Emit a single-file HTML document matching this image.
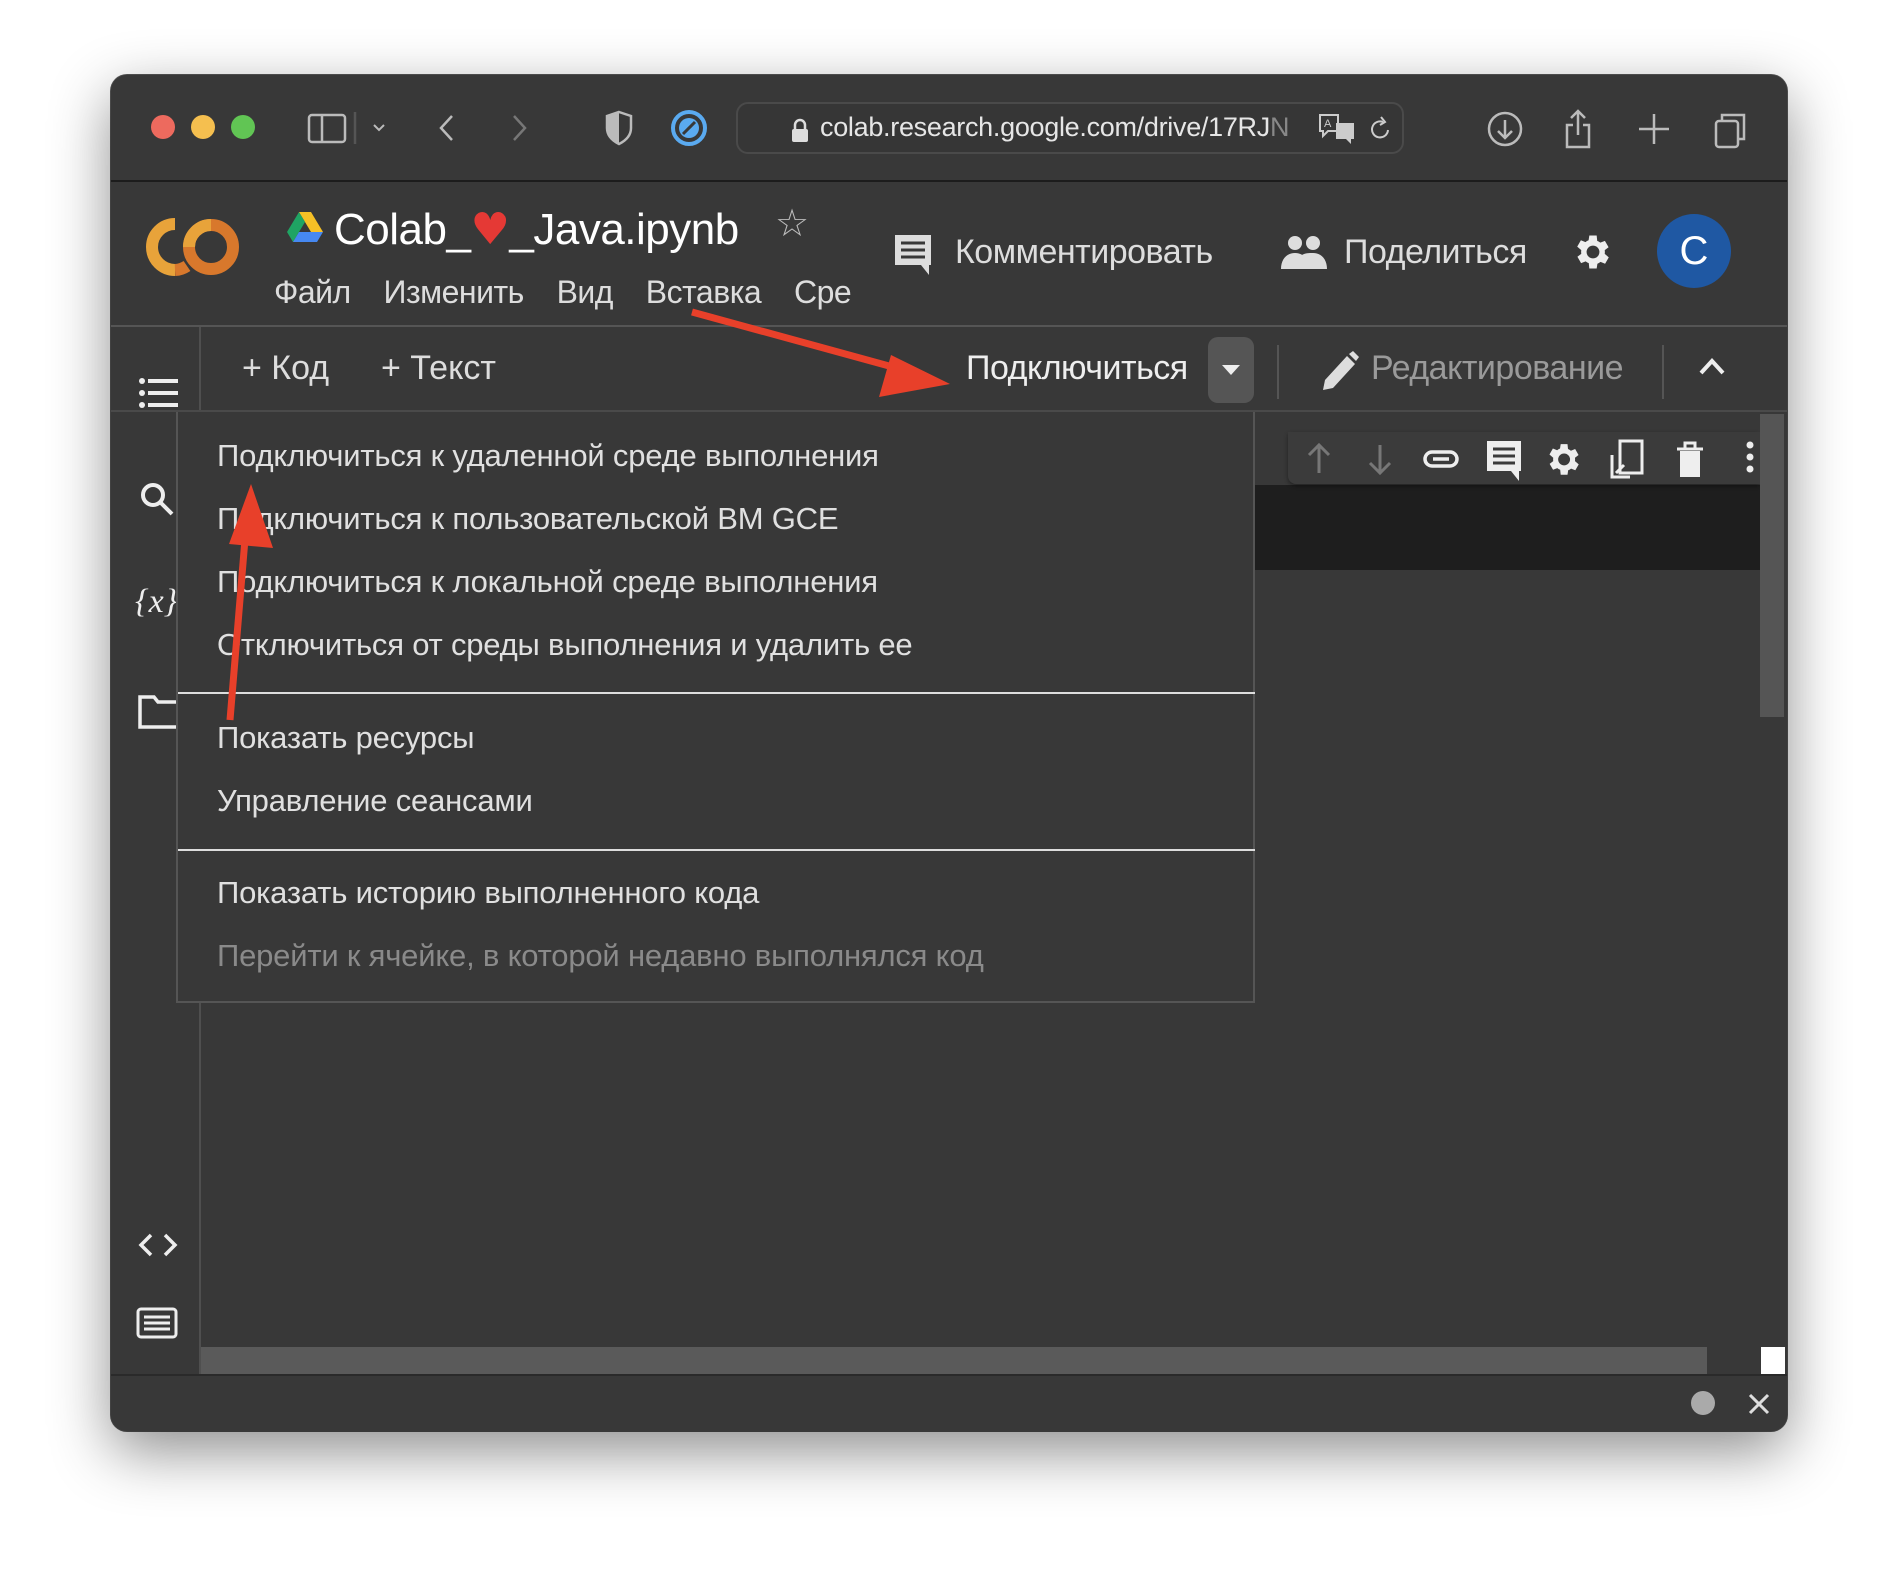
<!DOCTYPE html>
<html><head><meta charset="utf-8"><style>
*{margin:0;padding:0;box-sizing:border-box}
body{width:1898px;height:1578px;background:#fff;position:relative;overflow:hidden;font-family:"Liberation Sans","DejaVu Sans",sans-serif;color:#e3e3e3}
.a{position:absolute}
#win{left:111px;top:75px;width:1676px;height:1356px;background:#383838;border-radius:16px;overflow:hidden;box-shadow:0 20px 60px rgba(0,0,0,.45),0 0 0 1px #555}
.t{white-space:nowrap}
.mi{position:absolute;left:39px;font-size:31px;letter-spacing:-0.2px;color:#e0e0e0;white-space:nowrap}
</style></head><body>
<div id="win" class="a">
 <div class="a" style="left:0;top:0;width:1676px;height:107px;background:#383838;border-bottom:2px solid #1c1c1c"></div>
 <div class="a" style="left:40px;top:40px;width:24px;height:24px;border-radius:50%;background:#ed6a5e"></div>
 <div class="a" style="left:80px;top:40px;width:24px;height:24px;border-radius:50%;background:#f5bf4f"></div>
 <div class="a" style="left:120px;top:40px;width:24px;height:24px;border-radius:50%;background:#61c554"></div>
 <svg class="a" style="left:195px;top:35px" width="260" height="36" viewBox="0 0 260 36" fill="none" stroke="#bbb" stroke-width="2.5">
  <rect x="3" y="5" width="36" height="27" rx="3"/><line x1="16" y1="5" x2="16" y2="32"/>
  <line x1="49" y1="2" x2="49" y2="34" stroke="#555"/>
  <path d="M68 15l5 5 5-5" stroke-width="2"/>
  <path d="M146 6l-11 12 11 12"/>
  <path d="M208 6l11 12-11 12" stroke="#777"/>
 </svg>
 <svg class="a" style="left:488px;top:33px" width="40" height="40" viewBox="0 0 40 40"><path d="M20 4l12 4v12c0 8-6 13-12 16-6-3-12-8-12-16V8z" fill="none" stroke="#bbb" stroke-width="2.5"/><path d="M20 4v32c-6-3-12-8-12-16V8z" fill="#bbb"/></svg>
 <svg class="a" style="left:558px;top:33px" width="40" height="40" viewBox="0 0 40 40"><circle cx="20" cy="20" r="16" fill="none" stroke="#5aaaf0" stroke-width="4"/><circle cx="20" cy="20" r="10" fill="#5aaaf0"/><line x1="14" y1="26" x2="26" y2="14" stroke="#383838" stroke-width="3"/></svg>
 <div class="a" style="left:625px;top:27px;width:668px;height:52px;border:2px solid #4a4a4a;border-radius:12px;background:#363636"></div>
 <svg class="a" style="left:679px;top:42px" width="20" height="26" viewBox="0 0 20 26"><path d="M5 12V8a5 5 0 0110 0v4" fill="none" stroke="#ddd" stroke-width="2.5"/><rect x="2" y="12" width="16" height="13" rx="2" fill="#ddd"/></svg>
 <div class="a t" style="left:709px;top:37px;font-size:27px;color:#e6e6e6;letter-spacing:-0.3px">colab.research.google.com/drive/17RJ<span style="color:#888">N</span></div>
 <svg class="a" style="left:1207px;top:38px" width="40" height="32" viewBox="0 0 40 32"><path d="M2 2h18v16H10l-5 5v-5H2z" fill="none" stroke="#ccc" stroke-width="2"/><path d="M18 10h18v16h-3v5l-5-5H18z" fill="#ccc"/><text x="6" y="14" font-size="11" fill="#ccc" font-family="Liberation Sans">A</text></svg>
 <svg class="a" style="left:1257px;top:39px" width="26" height="28" viewBox="0 0 26 28"><path d="M20 16a8 8 0 11-5-8" fill="none" stroke="#ccc" stroke-width="2"/><path d="M13 3l4 5-5 3" fill="none" stroke="#ccc" stroke-width="2"/></svg>
 <svg class="a" style="left:1375px;top:33px" width="380" height="44" viewBox="0 0 380 44" fill="none" stroke="#bbb" stroke-width="2.5">
  <circle cx="19" cy="21" r="16"/><path d="M19 12v17M12 23l7 7 7-7"/>
  <path d="M87 17h-6v22h22V17h-6M92 3v24M85 10l7-7 7 7"/>
  <path d="M168 6v30M153 21h30"/>
  <rect x="230" y="13" width="22" height="26" rx="3"/><path d="M236 13V7h22v24h-6"/>
 </svg>
 <svg class="a" style="left:34px;top:143px" width="96" height="58" viewBox="0 0 96 58"><path d="M30 6a23 23 0 100 46" fill="none" stroke="#e8a33a" stroke-width="12"/><circle cx="66" cy="29" r="22" fill="none" stroke="#d8782c" stroke-width="12"/><path d="M66 7a22 22 0 00-22 22" fill="none" stroke="#e8a33a" stroke-width="12"/><path d="M30 52a23 23 0 0012-4" fill="none" stroke="#d8782c" stroke-width="12"/></svg>
 <svg class="a" style="left:176px;top:135px" width="36" height="32" viewBox="0 0 36 32"><path d="M12 2h12l12 20h-12z" fill="#f6c026"/><path d="M12 2L0 22l6 10 12-20z" fill="#1fa463"/><path d="M6 32h24l6-10H12z" fill="#4688f1"/></svg>
 <div class="a t" style="left:223px;top:129px;font-size:44px;color:#fff;letter-spacing:-0.5px">Colab_<span style="font-family:'DejaVu Sans';color:#e53935">♥</span>_Java.ipynb</div>
 <div class="a t" style="left:664px;top:126px;font-size:38px;color:#bbb">☆</div>
 <div class="a t" style="left:163px;top:199px;font-size:32px;color:#ddd;letter-spacing:-0.5px;word-spacing:8px">Файл &nbsp;Изменить &nbsp;Вид &nbsp;Вставка &nbsp;Сре</div>
 <svg class="a" style="left:782px;top:158px" width="40" height="44" viewBox="0 0 40 44"><path d="M2 2h36v30h-2v10l-8-10H2z" fill="#ddd"/><path d="M8 10h24M8 17h24M8 24h24" stroke="#383838" stroke-width="3"/></svg>
 <div class="a t" style="left:844px;top:158px;font-size:34px;color:#ddd;letter-spacing:-0.5px">Комментировать</div>
 <svg class="a" style="left:1170px;top:160px" width="46" height="34" viewBox="0 0 46 34" fill="#ddd"><circle cx="14" cy="8" r="7"/><circle cx="32" cy="8" r="7"/><path d="M0 34c0-10 6-16 14-16s14 6 14 16zM24 34c0-6-1-10-3-14 3-2 7-2 11-2 8 0 14 6 14 16z"/></svg>
 <div class="a t" style="left:1233px;top:158px;font-size:34px;color:#ddd;letter-spacing:-0.5px">Поделиться</div>
 <svg class="a" style="left:1460px;top:155px" width="44" height="44" viewBox="0 0 24 24"><path fill="#eee" d="M19.4 13a7.5 7.5 0 000-2l2.1-1.6-2-3.5-2.5 1a7 7 0 00-1.7-1L15 3h-4l-.4 2.6a7 7 0 00-1.7 1l-2.5-1-2 3.5L6.6 11a7.5 7.5 0 000 2l-2.1 1.6 2 3.5 2.5-1a7 7 0 001.7 1L11 21h4l.4-2.6a7 7 0 001.7-1l2.5 1 2-3.5zM13 15.5a3.5 3.5 0 110-7 3.5 3.5 0 010 7z" transform="translate(-1 0)"/></svg>
 <div class="a" style="left:1546px;top:139px;width:74px;height:74px;border-radius:50%;background:#1f58a3;color:#fff;font-size:40px;text-align:center;line-height:74px">C</div>
 <div class="a" style="left:0;top:250px;width:1676px;height:2px;background:#555"></div>
 <div class="a" style="left:88px;top:252px;width:2px;height:1050px;background:#4f4f4f"></div>
 <div class="a t" style="left:131px;top:274px;font-size:34px;color:#ddd">+ Код</div>
 <div class="a t" style="left:270px;top:274px;font-size:34px;color:#ddd">+ Текст</div>
 <div class="a t" style="left:855px;top:274px;font-size:34px;color:#eee;letter-spacing:-0.5px">Подключиться</div>
 <div class="a" style="left:1097px;top:262px;width:46px;height:66px;border-radius:10px;background:#555"></div>
 <div class="a" style="left:1111px;top:290px;width:0;height:0;border-left:9px solid transparent;border-right:9px solid transparent;border-top:10px solid #eee"></div>
 <div class="a" style="left:1166px;top:270px;width:2px;height:54px;background:#555"></div>
 <svg class="a" style="left:1210px;top:275px" width="38" height="42" viewBox="0 0 38 42"><path d="M2 40l2-10 22-24 8 8-22 24z" fill="#ddd"/><path d="M28 4l4-3 6 6-3 4z" fill="#ddd"/></svg>
 <div class="a t" style="left:1260px;top:274px;font-size:34px;color:#9a9a9a;letter-spacing:-0.5px">Редактирование</div>
 <div class="a" style="left:1551px;top:270px;width:2px;height:54px;background:#555"></div>
 <svg class="a" style="left:1586px;top:280px" width="30" height="22" viewBox="0 0 30 22"><path d="M4 18L15 6l11 12" fill="none" stroke="#eee" stroke-width="4"/></svg>
 <div class="a" style="left:0;top:335px;width:1676px;height:2px;background:#4a4a4a"></div>
 <svg class="a" style="left:28px;top:300px" width="40" height="36" viewBox="0 0 40 36" fill="#eee"><circle cx="3" cy="6" r="3"/><circle cx="3" cy="18" r="3"/><circle cx="3" cy="30" r="3"/><rect x="9" y="4" width="30" height="4"/><rect x="9" y="16" width="30" height="4"/><rect x="9" y="28" width="30" height="4"/></svg>
 <svg class="a" style="left:28px;top:406px" width="40" height="40" viewBox="0 0 40 40"><circle cx="14" cy="14" r="10" fill="none" stroke="#eee" stroke-width="4"/><path d="M21 21l12 12" stroke="#eee" stroke-width="4"/></svg>
 <div class="a t" style="left:24px;top:508px;font-size:34px;font-family:'Liberation Serif',serif;font-style:italic;color:#eee">{x}</div>
 <svg class="a" style="left:27px;top:620px" width="42" height="34" viewBox="0 0 42 34"><path d="M2 2h14l4 5h20v25H2z" fill="none" stroke="#eee" stroke-width="3.5"/></svg>
 <svg class="a" style="left:26px;top:1155px" width="42" height="30" viewBox="0 0 42 30"><path d="M14 5L4 15l10 10M28 5l10 10-10 10" fill="none" stroke="#eee" stroke-width="3.5"/></svg>
 <svg class="a" style="left:25px;top:1232px" width="42" height="32" viewBox="0 0 42 32"><rect x="2" y="2" width="38" height="28" rx="3" fill="none" stroke="#eee" stroke-width="3"/><path d="M8 10h26M8 16h26M8 22h26" stroke="#eee" stroke-width="3"/></svg>
 <div class="a" style="left:1143px;top:410px;width:506px;height:85px;background:#1e1e1e"></div>
 <div class="a" style="left:1177px;top:357px;width:472px;height:52px;background:#3b3b3b;border-radius:0 0 0 8px;box-shadow:0 2px 4px rgba(0,0,0,.4)"></div>
 <svg class="a" style="left:1190px;top:362px" width="462" height="44" viewBox="0 0 462 44">
  <path d="M18 36V8M8 18l10-10 10 10" fill="none" stroke="#777" stroke-width="3"/>
  <path d="M79 8v28M69 26l10 10 10-10" fill="none" stroke="#777" stroke-width="3"/>
  <rect x="124" y="15" width="32" height="14" rx="7" fill="none" stroke="#eee" stroke-width="3.5"/><path d="M132 22h16" stroke="#eee" stroke-width="3.5"/>
  <path d="M186 4h34v30h-2v10l-8-10h-24z" fill="#eee"/><path d="M192 12h22M192 19h22M192 26h22" stroke="#3b3b3b" stroke-width="3"/>
  <g transform="translate(241 2) scale(1.7)"><path fill="#eee" d="M19.4 13a7.5 7.5 0 000-2l2.1-1.6-2-3.5-2.5 1a7 7 0 00-1.7-1L15 3h-4l-.4 2.6a7 7 0 00-1.7 1l-2.5-1-2 3.5L6.6 11a7.5 7.5 0 000 2l-2.1 1.6 2 3.5 2.5-1a7 7 0 001.7 1L11 21h4l.4-2.6a7 7 0 001.7-1l2.5 1 2-3.5zM13 15.5a3.5 3.5 0 110-7 3.5 3.5 0 010 7z"/></g>
  <rect x="319" y="4" width="22" height="32" fill="none" stroke="#eee" stroke-width="3"/><path d="M311 18v22h18M315 36l8-8" fill="none" stroke="#eee" stroke-width="3"/>
  <path d="M376 12h26M384 12V6h10v6" fill="none" stroke="#eee" stroke-width="3"/><rect x="379" y="14" width="20" height="26" fill="#eee"/>
  <circle cx="449" cy="8" r="3.5" fill="#eee"/><circle cx="449" cy="20" r="3.5" fill="#eee"/><circle cx="449" cy="32" r="3.5" fill="#eee"/>
 </svg>
 <div class="a" style="left:1649px;top:339px;width:24px;height:303px;background:#555"></div>
 <div class="a" style="left:90px;top:1272px;width:1506px;height:27px;background:#5a5a5a"></div>
 <div class="a" style="left:1650px;top:1272px;width:24px;height:27px;background:#fff"></div>
 <div class="a" style="left:0;top:1299px;width:1676px;height:57px;background:#383838;border-top:2px solid #2a2a2a"></div>
 <div class="a" style="left:1580px;top:1316px;width:24px;height:24px;border-radius:50%;background:#aaa"></div>
 <svg class="a" style="left:1636px;top:1317px" width="24" height="24" viewBox="0 0 24 24"><path d="M3 3l18 18M21 3L3 21" stroke="#ddd" stroke-width="3"/></svg>
 <div class="a" style="left:65px;top:337px;width:1079px;height:591px;background:#383838;border:2px solid #555;border-top:none">
  <div class="mi" style="top:26px">Подключиться к удаленной среде выполнения</div>
  <div class="mi" style="top:89px">Подключиться к пользовательской ВМ GCE</div>
  <div class="mi" style="top:152px">Подключиться к локальной среде выполнения</div>
  <div class="mi" style="top:215px">Отключиться от среды выполнения и удалить ее</div>
  <div class="a" style="left:0;top:280px;width:1077px;height:2px;background:#ddd"></div>
  <div class="mi" style="top:308px">Показать ресурсы</div>
  <div class="mi" style="top:371px">Управление сеансами</div>
  <div class="a" style="left:0;top:437px;width:1077px;height:2px;background:#ddd"></div>
  <div class="mi" style="top:463px">Показать историю выполненного кода</div>
  <div class="mi" style="top:526px;color:#8a8a8a">Перейти к ячейке, в которой недавно выполнялся код</div>
 </div>
 <svg class="a" style="left:0;top:0" width="1676" height="1356" viewBox="0 0 1676 1356">
  <path d="M581 237L800 297" stroke="#e8402a" stroke-width="7"/>
  <path d="M839 309L780 280 768 322z" fill="#e8402a"/>
  <path d="M119 645L136 440" stroke="#e8402a" stroke-width="7"/>
  <path d="M140 409L118 469 162 473z" fill="#e8402a"/>
 </svg>
</div>
</body></html>
